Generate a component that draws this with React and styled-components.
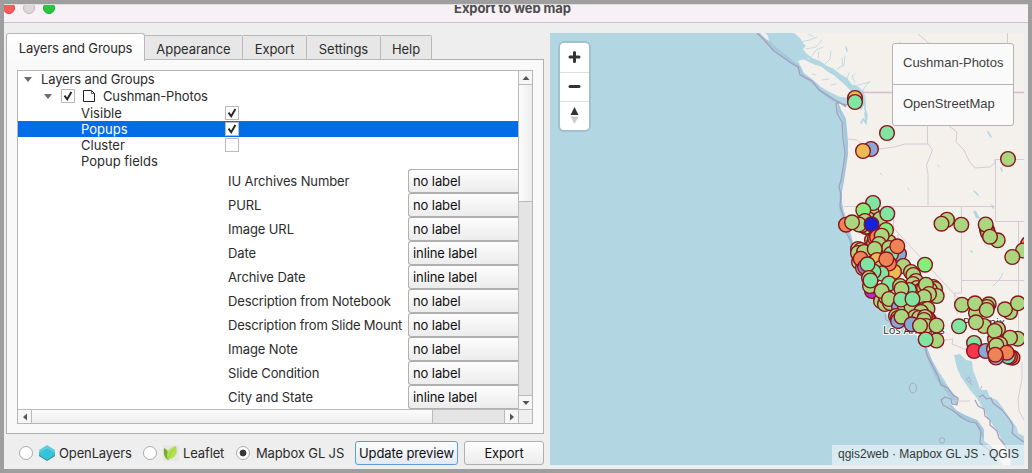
import React from "react";
import styled, { createGlobalStyle, css } from "styled-components";

const Global = createGlobalStyle`
  * { box-sizing: border-box; }
  body { margin: 0; background: #9e9e9e; }
`;

const Frame = styled.div`
  width: 1032px;
  height: 473px;
  overflow: hidden;
  padding: 4px 4px 4px 4px;
  background: #9e9e9e;
  font-family: Inter, "Liberation Sans", sans-serif;
  font-size: 13px;
  letter-spacing: -0.13px;
  color: #2b2b2b;
`;
const Window = styled.div`
  height: 465px;
  display: flex;
  flex-direction: column;
  background: #eeeeee;
  overflow: hidden;
`;
const TitleBar = styled.header`
  flex: none;
  height: 19px;
  display: grid;
  grid-template-columns: 60px 1fr 60px;
  background: #f7f1f6;
  border-top: 1px solid #dedede;
  border-bottom: 1px solid #c3c3c3;
  overflow: hidden;
`;
const Lights = styled.div`
  display: flex;
  gap: 8px;
  margin: -3px 0 0 -1px;
`;
const Light = styled.i`
  width: 12px;
  height: 12px;
  border-radius: 50%;
  background: ${(p) => p.$fill};
  border: 1px solid ${(p) => p.$edge};
`;
const Title = styled.h1`
  margin: -5px 0 0;
  padding-right: 7px;
  text-align: center;
  font-size: 13px;
  line-height: 16px;
  font-weight: 700;
  color: #4c4a4c;
  letter-spacing: -0.08px;
`;
const Body = styled.main`
  flex: 1;
  display: flex;
  gap: 6px;
  padding: 10px 4px 0 2px;
`;
const Side = styled.section`
  width: 538px;
  flex: none;
`;
const Tabs = styled.nav`
  display: flex;
  align-items: flex-end;
  height: 27px;
`;
const Tab = styled.div`
  height: 25px;
  width: ${(p) => p.$w}px;
  padding-top: 2px;
  display: flex;
  align-items: center;
  justify-content: center;
  background: #e7e7e7;
  border: 1px solid #b9b9b9;
  border-left: 0;
  border-radius: 0 2px 0 0;
  letter-spacing: -0.05px;
  ${(p) =>
    p.$active &&
    css`
      height: 28px;
      margin-bottom: -1px;
      padding-top: 0;
      background: linear-gradient(#ffffff, #f9f9f9);
      border-left: 1px solid #b0b0b0;
      border-bottom: 0;
      border-radius: 3px 3px 0 0;
      letter-spacing: -0.13px;
      position: relative;
      z-index: 1;
    `}
`;
const Panel = styled.div`
  height: 375px;
  margin-top: -1px;
  padding: 10px;
  background: #f9f9f9;
  border: 1px solid #b0b0b0;
`;
const Tree = styled.div`
  height: 354px;
  width: 516px;
  display: grid;
  grid-template-columns: 500px 14px;
  grid-template-rows: 338px 14px;
  background: #ffffff;
  border: 1px solid #b5b5b5;
`;
const Rows = styled.div`
  overflow: hidden;
`;
const Row = styled.div`
  height: ${(p) => p.$h || 16}px;
  padding-left: ${(p) => p.$indent}px;
  display: flex;
  align-items: center;
  white-space: nowrap;
  line-height: 16px;
  background: ${(p) => (p.$selected ? "#026de6" : "transparent")};
  color: ${(p) => (p.$selected ? "#ffffff" : "#2b2b2b")};
`;
const Key = styled.span`
  width: 144px;
  letter-spacing: 0;
`;
const Arrow = styled.i`
  width: 0;
  height: 0;
  margin-right: 9px;
  border: 4px solid transparent;
  border-top: 5px solid #6d6d6d;
  border-bottom: 0;
`;
const Check = styled.span`
  width: 14px;
  height: 14px;
  display: flex;
  background: #ffffff;
  border: 1px solid #bababa;
  color: #252525;
`;
const FileIcon = styled.svg`
  width: 12px;
  height: 12px;
  margin: 0 8px;
`;
const Field = styled.div`
  height: 24px;
  padding-left: 210px;
  display: grid;
  grid-template-columns: 180px 110px;
  align-items: center;
  letter-spacing: ${(p) => p.$track || -0.1}px;
  white-space: nowrap;
`;
const Select = styled.div`
  height: 24px;
  padding: 0 4px 1px;
  display: flex;
  align-items: center;
  background: linear-gradient(#fdfdfd, #ececec);
  border: 1px solid #b0b0b0;
  border-right: 0;
  border-radius: 3px 0 0 3px;
  letter-spacing: -0.1px;
  color: #101010;
`;
const VBar = styled.div`
  display: grid;
  grid-template-rows: 13px 118px 1fr 14px;
  background: #e4e4e4;
  border-left: 1px solid #bababa;
`;
const HBar = styled.div`
  display: grid;
  grid-template-columns: 14px 401px 1fr 14px;
  background: #e4e4e4;
  border-top: 1px solid #bababa;
`;
const BarButton = styled.span`
  display: flex;
  align-items: center;
  justify-content: center;
  background: #f6f6f6;
  border: 0 solid #bababa;
  border-width: ${(p) => p.$edges};
`;
const Thumb = styled.span`
  border: 0 solid #bababa;
  ${(p) =>
    p.$vertical
      ? css`
          background: linear-gradient(90deg, #fcfcfc, #ededed);
          border-width: 1px 0;
        `
      : css`
          background: linear-gradient(#fcfcfc, #ededed);
          border-right-width: 1px;
        `}
`;
const Corner = styled.span`
  background: #efefef;
  border: 1px solid #bababa;
  border-width: 1px 0 0 1px;
`;
const Footer = styled.footer`
  height: 38px;
  display: flex;
  align-items: center;
  padding-left: 13px;
  white-space: nowrap;
`;
const Choice = styled.label`
  width: ${(p) => p.$w}px;
  display: flex;
  align-items: center;
`;
const Radio = styled.i`
  width: 14px;
  height: 14px;
  flex: none;
  margin-right: 6px;
  border-radius: 50%;
  border: 1px solid #aaaaaa;
  background: ${(p) =>
    p.$on ? "radial-gradient(circle, #383838 0 3px, #ffffff 3.8px)" : "#ffffff"};
`;
const Logo = styled.svg`
  width: 16px;
  height: 16px;
  flex: none;
  margin-right: 4px;
`;
const Button = styled.button`
  width: ${(p) => p.$w}px;
  height: 24px;
  margin: 0 0 0 ${(p) => p.$gap || 0}px;
  padding: 0;
  font: inherit;
  letter-spacing: -0.13px;
  color: #101010;
  border-radius: 3px;
  border: 1px solid ${(p) => (p.$focus ? "#5e9bdc" : "#b0b0b0")};
  background: ${(p) =>
    p.$focus ? "linear-gradient(#fbfdff, #e4e9f0)" : "linear-gradient(#fdfdfd, #ececec)"};
`;
const MapPane = styled.section`
  width: 474px;
  height: 432px;
  position: relative;
  overflow: hidden;
  font-family: "Liberation Sans", Arial, sans-serif;
  letter-spacing: 0;
`;
const MapDrawing = styled.svg`
  display: block;
  width: 474px;
  height: 432px;
`;
const ZoomControls = styled.div`
  position: absolute;
  left: 10px;
  top: 10px;
  width: 29px;
  background: #ffffff;
  border-radius: 4px;
  box-shadow: 0 0 0 2px rgba(0, 0, 0, 0.1);
`;
const ZoomButton = styled.div`
  height: 29px;
  padding-bottom: 1px;
  display: grid;
  place-items: center;
  & + & {
    border-top: 1px solid #dddddd;
  }
`;
const LayerMenu = styled.div`
  position: absolute;
  left: 342px;
  top: 10px;
  width: 122px;
  background: #fafafa;
  border: 1px solid #b4b4b4;
  border-radius: 3px;
`;
const LayerItem = styled.div`
  height: ${(p) => p.$h}px;
  padding: 0 0 3px 10px;
  display: flex;
  align-items: center;
  font-size: 13px;
  color: #404040;
  & + & {
    border-top: 1px solid #b4b4b4;
  }
`;
const Attribution = styled.div`
  position: absolute;
  right: 0;
  bottom: 0;
  width: 192px;
  height: 20px;
  padding-left: 6px;
  line-height: 19px;
  font-size: 12px;
  white-space: nowrap;
  color: #33393b;
  background: rgba(255, 255, 255, 0.5);
`;

const tabs = [
  ["Layers and Groups", 139],
  ["Appearance", 98],
  ["Export", 64],
  ["Settings", 74],
  ["Help", 51],
];

const fields = [
  ["IU Archives Number", "no label"],
  ["PURL", "no label"],
  ["Image URL", "no label"],
  ["Date", "inline label"],
  ["Archive Date", "inline label"],
  ["Description from Notebook", "no label", -0.14],
  ["Description from Slide Mount", "no label", -0.19],
  ["Image Note", "no label"],
  ["Slide Condition", "no label"],
  ["City and State", "inline label"],
];

const fill = {
  g: "#a9d67e",
  m: "#7fe5a1",
  b: "#84ee79",
  o: "#ee8355",
  y: "#e8bb55",
  u: "#86a9d6",
  d: "#1522d8",
  r: "#f5364f",
  p: "#9a72cc",
  v: "#b02fd0",
  t: "#6adcc0",
};

/* Photo locations, listed from the lowest to the topmost marker. */
const photos = [
  ["y", 855, 98], ["m", 855, 102], ["m", 887, 133], ["u", 871, 149], ["y", 863, 151], ["g", 1008, 159],
  ["g", 872, 213], ["g", 877, 221], ["g", 868, 219], ["g", 866, 227], ["g", 869, 227], ["g", 880, 219],
  ["m", 873, 203], ["b", 863.3, 210.3], ["m", 887.3, 213.7],
  ["o", 846, 224.7], ["g", 862, 225], ["g", 865, 221], ["g", 859, 224.5], ["g", 852, 222.3], ["d", 871.5, 224.3],
  ["g", 872, 240], ["g", 874, 243], ["o", 875, 238], ["g", 885, 242], ["g", 889, 242], ["b", 886, 230], ["o", 877, 237], ["g", 881.7, 235.7],
  ["g", 858, 249], ["g", 861, 250], ["g", 858, 253], ["g", 864, 252], ["m", 883, 252], ["g", 879, 244], ["g", 889, 248],
  ["u", 899, 254], ["m", 891, 254], ["o", 897.3, 246.3], ["g", 874.7, 249],
  ["g", 859, 262], ["g", 863, 268], ["o", 860.7, 258.7], ["y", 877, 260], ["g", 873, 276],
  ["g", 881, 268], ["g", 903.3, 266], ["y", 894, 271.7], ["o", 889, 263.5], ["o", 886.3, 259.3],
  ["m", 881.5, 273.5], ["m", 873.5, 271.5], ["p", 865, 267], ["m", 867.5, 264.3],
  ["v", 872, 291], ["g", 870, 286], ["g", 869, 278], ["m", 870.5, 280.5], ["b", 925, 264.7],
  ["g", 911, 272], ["g", 913.3, 275], ["g", 916, 281], ["g", 913, 284], ["g", 917, 288],
  ["g", 933, 287], ["g", 935, 289], ["g", 930, 290], ["g", 920, 291],
  ["g", 881, 301], ["g", 885, 304], ["g", 890, 303], ["g", 886, 297], ["m", 909, 290], ["m", 889, 283.5], ["g", 881.7, 291],
  ["g", 900, 286], ["g", 901.5, 289], ["g", 924, 288], ["g", 926, 284.7], ["g", 936.7, 296], ["g", 929, 294], ["g", 924, 297],
  ["g", 889, 299], ["u", 899, 307], ["g", 905, 307], ["g", 914, 308], ["g", 911.5, 306.7],
  ["g", 925, 309], ["g", 927.5, 309], ["g", 921, 312], ["m", 901, 299.5], ["m", 912.5, 299],
  ["g", 896, 316], ["g", 898, 318], ["u", 898, 321], ["g", 915, 317], ["g", 919, 318], ["u", 929, 320], ["g", 927, 318],
  ["g", 901.5, 316.7], ["u", 911.7, 324.3], ["g", 925, 317], ["g", 924, 320], ["g", 926, 326], ["g", 920, 325.7], ["g", 936.5, 325.5],
  ["g", 936.5, 340.5], ["m", 925.7, 339.5],
  ["g", 947, 219.7], ["g", 941.5, 223.7], ["g", 961.3, 224.7], ["g", 987, 230], ["g", 988, 233], ["g", 985.7, 224.5],
  ["g", 997.7, 240.3], ["g", 990, 236.7], ["o", 1028, 244], ["g", 1023, 250.5], ["g", 1012.3, 257],
  ["g", 962, 304.7], ["g", 976, 313], ["g", 988.7, 304.3], ["g", 987, 307], ["g", 975, 303.3], ["g", 986.7, 310],
  ["g", 1010, 312], ["g", 1005, 309.3], ["g", 1018, 303.3], ["m", 959, 326.3], ["g", 984, 326], ["g", 976, 322.3],
  ["g", 998, 329], ["g", 995, 339], ["g", 994.7, 331], ["g", 1017.7, 338.7], ["g", 1010, 337.7], ["m", 974, 343],
  ["r", 974, 351], ["u", 985.7, 351], ["o", 997, 345], ["g", 1000, 344], ["g", 994, 349], ["g", 996.3, 345.3],
  ["o", 1012.5, 357.7], ["o", 1010, 357], ["t", 1008, 356.5], ["o", 1006.7, 352.7], ["u", 996, 357.5], ["o", 995.3, 354.7],
];

function Tick() {
  return (
    <svg width="12" height="12" viewBox="0 0 12 12" fill="none" stroke="currentColor">
      <path d="M2.500 5.600 5.200 9.200 9.400 2" strokeWidth="1.900" />
    </svg>
  );
}

function Point({ d }) {
  return (
    <svg width="8" height="8" viewBox="0 0 8 8" fill="#555555">
      <path d={d} />
    </svg>
  );
}

function WebMap() {
  return (
    <MapDrawing viewBox="550 33 474 432">
      <rect x="550" y="33" width="474" height="432" fill="#b3d7e2" />
      {/* shallow water along the coast */}
      <g fill="none" stroke="#9cc3d9" strokeWidth="5" strokeLinejoin="round" opacity=".75">
        <path d="M759 33 776 49 791 61 799 67 803 76 813 82 821 91 832 99 840 103 839 110 844 118 846 135 847 155 844 175 841 194 841 210 845 224 849 235 853 250 861 273 870 291" strokeWidth="3" />
        <path d="M925 345 930 360 939 380 948 391 954 399 958 403M951 405 963 416 977 422 983 434 994 450 1002 465" strokeWidth="4" />
      </g>
      <g fill="#f4f1ed">
        <path d="M794 33 800 38 803 43 806 46 803 49 806 53 812 58 820 61 827 66 834 69 840 74 847 78 852 85 859 87 863 93 865 103 861 111 858 104 851 103 845 107 838 102 841 109 846 119 847 129 848 142 848 155 845 175 842 192 842 202 844 211 847 220 849 226 853 242 857 253 860 265 868 280 873 288 880 303 887 314 890 321 901 323 909 328 916 335 924 341 928 350 932 360 939 372 945 381 949 388 954 394 959 400 956 405 951 404 956 410 965 415 977 420 984 429 984 441 992 447 998 456 1003 465H1024V33Z" />
        <path d="M798 61 808 58 814 64 822 67 828 72 835 76 844 84 852 92 850 98 840 97 830 92 821 87 812 79 804 73Z" />
        <path d="m760 33 6 6 3 2-1-5-3-3Z" />
      </g>
      <path d="M954 355 960 354 966 360 972 361 973 370 978 383 980 390 987 390 990 397 997 400 1003 408 1010 418 1017 428 1018 433 1024 436V465H1011L1009 451 1002 441 998 432 989 420 984 410 976 397 970 390 961 377 957 368Z" fill="#b3d7e2" />
      <path d="m994 453 7 2 4 10h-6Z" fill="#f4f1ed" opacity=".5" />
      {/* inlets and lakes */}
      <g fill="none" stroke="#b3d7e2" strokeLinecap="round">
        <path d="m835 73 6 6 7 5 8 4 7 4" strokeWidth="3" />
        <path d="m804 58 7 4 5 2" strokeWidth="2.400" />
        <path d="M863 95l2 6 0 8 2 6-1 8-3-4-2 4M865 113l1 10" strokeWidth="1.700" />
        <path d="m800 42 10-2 7-3M806 49l10-2 6-7M811 57l5-7 7-3M825 64l5-5 1-8M837 69l7-4 1-9M847 79l2-6M854 86l16-4M862 91l7-9M866 98l-4-7M808 34l5 2M855 83l-3-7 3-2M818 58l1-6M843 66l-1-8M812 74l4 1M822 80l7-1M831 85l5-1" strokeWidth=".8" />
        <path d="M975 212l4 6M984 217l2 2M971 251l1 1M846 47l1 4M988 132l3 5M1001 168l1 3M974 191l4 4M992 205l1 3" strokeWidth="1.500" />
        <path d="M993 286l7-7 3-6M898 234l0 4M900 42l2 6M896 121l8-1 1-6M922 110l3-9M880 173l2 2M938 165l1 2M908 188l1 2" strokeWidth=".9" />
        <path d="m975 212 2 5" strokeWidth="3" />
      </g>
      {/* offshore boundary */}
      <g fill="none" stroke="#a59bbd" strokeWidth="1.2" strokeLinejoin="round">
        <path d="m757 33 9 9 8 9 10 7 7 5 7 4 2 8 12 6 7 9 11 7 9 6 8 2M846 107l-7-5-3 2 1 9 5 9 1 16 2 15-2 15-2 12-2 7 2 8-1 11 4 12 1 13 6 10 2 12 4 12 7 18 5 9 10 15" />
        <path d="m925 344 2 11 6 12 5 9 3 9 7 3 5 7 5 3-1 7-5-1-1-5-6-2-4 3 2 5 9 5 10 8 8 4 6 1 5 8-1 12 9 7 3 8" />
        <path d="m979 397 4-2 3 4 5-1 2 5 9 7 8 10 3 6-1 7 6 5 6 4M975 400l3 6 6 3 1 7 5 4 0 5 7 6 2 7 5 6 3 5" />
        <path d="M885 314l1 6 5 2M907 325l0 5 5 3 4-2" strokeWidth=".8" />
        <ellipse cx="913" cy="388" rx="3.500" ry="5" strokeWidth=".8" />
        <circle cx="942" cy="440.500" r="2.700" strokeWidth=".8" />
        <path d="M971 382l-2-5-3 2 6 6M982 386l-2 4" strokeWidth=".7" />
      </g>
      <path d="M862 92.500H1024" stroke="#d3bdd0" strokeWidth="1.500" fill="none" />
      <g fill="none" stroke="#d8cad5" strokeWidth="1">
        <path d="m848 139 9 1 10 8 12 1 15-2 11-3h23M927.500 93v50l5 7-6 15 1.500 9v32M844 206.500H995.500M893.500 207v21l67 73" />
        <path d="M949 126l8 6-1 10 8 8 5 11 6 7 15-1 5-4V159.500H1024M995.500 159.500v62h29M961.500 207v86l-7 0 1 13 2 8M961.500 280.500H1024M1018.500 222v120M918 34l6 5 8 7M1007.500 33v10M928 342l25-3-1 5 32 13 15 1M1022 362l0 17-4 20 1 12 5 9M953 401h17" />
      </g>
      <g fontFamily="Noto Sans, sans-serif" fontSize="11" fill="#333333" stroke="#ffffff" strokeWidth="2" paintOrder="stroke">
        <text x="883" y="334">Los Angeles</text>
        <text x="963" y="326">Phoenix</text>
      </g>
      <g stroke="#8a121c" strokeWidth="1.400">
        {photos.map(([kind, x, y], i) => (
          <circle key={i} cx={x} cy={y} r="7.350" fill={fill[kind]} />
        ))}
      </g>
    </MapDrawing>
  );
}

export default function App() {
  return (
    <Frame>
      <Global />
      <Window>
        <TitleBar>
          <Lights>
            <Light $fill="#fc5b57" $edge="#e2453f" />
            <Light $fill="#dcd7db" $edge="#bfbabe" />
            <Light $fill="#29c73f" $edge="#1dab2f" />
          </Lights>
          <Title>Export to web map</Title>
        </TitleBar>
        <Body>
          <Side>
            <Tabs>
              {tabs.map(([name, w], i) => (
                <Tab key={name} $w={w} $active={i === 0}>{name}</Tab>
              ))}
            </Tabs>
            <Panel>
              <Tree>
                <Rows>
                  <Row $indent={6}><Arrow />Layers and Groups</Row>
                  <Row $indent={26} $h={18}>
                    <Arrow />
                    <Check><Tick /></Check>
                    <FileIcon viewBox="0 0 12 12" fill="none" stroke="#222222">
                      <path d="M.5 .5H8.500L11.500 3.500V11.500H.5Z" />
                      <path d="M8.500 .5V3.500H11.500" strokeWidth=".7" />
                    </FileIcon>
                    Cushman-Photos
                  </Row>
                  <Row $indent={63}><Key>Visible</Key><Check><Tick /></Check></Row>
                  <Row $indent={63} $selected><Key>Popups</Key><Check><Tick /></Check></Row>
                  <Row $indent={63}><Key>Cluster</Key><Check /></Row>
                  <Row $indent={63}><Key>Popup fields</Key></Row>
                  {fields.map(([name, value, track]) => (
                    <Field key={name} $track={track}>{name}<Select>{value}</Select></Field>
                  ))}
                </Rows>
                <VBar>
                  <BarButton><Point d="M.5 6 4 2 7.500 6Z" /></BarButton>
                  <Thumb $vertical />
                  <span />
                  <BarButton $edges="1px 0 0"><Point d="M.5 2H7.500L4 6Z" /></BarButton>
                </VBar>
                <HBar>
                  <BarButton $edges="0 1px 0 0"><Point d="M6 .5V7.500L2 4Z" /></BarButton>
                  <Thumb />
                  <span />
                  <BarButton $edges="0 0 0 1px"><Point d="M2 .5V7.500L6 4Z" /></BarButton>
                </HBar>
                <Corner />
              </Tree>
            </Panel>
            <Footer>
              <Choice $w={124}>
                <Radio />
                <Logo viewBox="0 0 16 16">
                  <path d="m0 9 8-5 8 5v2l-8 5-8-5Z" fill="#2f8397" />
                  <path d="m0 7 8-5 8 5v3l-8 5-8-5Z" fill="#35c3d8" />
                  <path d="m0 5 8-5 8 5v1L8 11 0 6Z" fill="#66cbdb" />
                  <path d="m2 6.500 6-3 6 3L8 12Z" fill="#36c2d6" />
                </Logo>
                OpenLayers
              </Choice>
              <Choice $w={93}>
                <Radio />
                <Logo viewBox="0 0 16 16">
                  <rect width="16" height="16" fill="#e6e6e4" />
                  <path d="m1 3 3 2 2 4-.5 6C1.500 13 0 9 1 3Z" fill="#79ad27" />
                  <path d="M13 1c2 7 0 12-8 13.500C2 7 6 3 13 1Z" fill="#b2e052" />
                  <path d="M12.500 2Q7 7 5 15" fill="none" stroke="#8fca3c" strokeWidth=".8" />
                </Logo>
                Leaflet
              </Choice>
              <Choice $w={119}><Radio $on />Mapbox GL JS</Choice>
              <Button $w={103} $focus>Update preview</Button>
              <Button $w={80} $gap={6}>Export</Button>
            </Footer>
          </Side>
          <MapPane>
            <WebMap />
            <ZoomControls>
              <ZoomButton>
                <svg width="15" height="14" viewBox="0 0 15 14" stroke="#333333" strokeWidth="3" strokeLinecap="round">
                  <path d="M7.500 2.500v9M3 7h9" />
                </svg>
              </ZoomButton>
              <ZoomButton>
                <svg width="15" height="13" viewBox="0 0 15 13" stroke="#333333" strokeWidth="3" strokeLinecap="round">
                  <path d="M3 6.500h9" />
                </svg>
              </ZoomButton>
              <ZoomButton>
                <svg width="9" height="17" viewBox="0 0 9 17">
                  <path d="M.5 8 4.500 0 8.500 8Z" fill="#333333" />
                  <path d="M.5 9.500 4.500 17 8.500 9.500Z" fill="#cccccc" />
                </svg>
              </ZoomButton>
            </ZoomControls>
            <LayerMenu>
              <LayerItem $h={40}>Cushman-Photos</LayerItem>
              <LayerItem $h={41}>OpenStreetMap</LayerItem>
            </LayerMenu>
            <Attribution>qgis2web · Mapbox GL JS · QGIS</Attribution>
          </MapPane>
        </Body>
      </Window>
    </Frame>
  );
}
